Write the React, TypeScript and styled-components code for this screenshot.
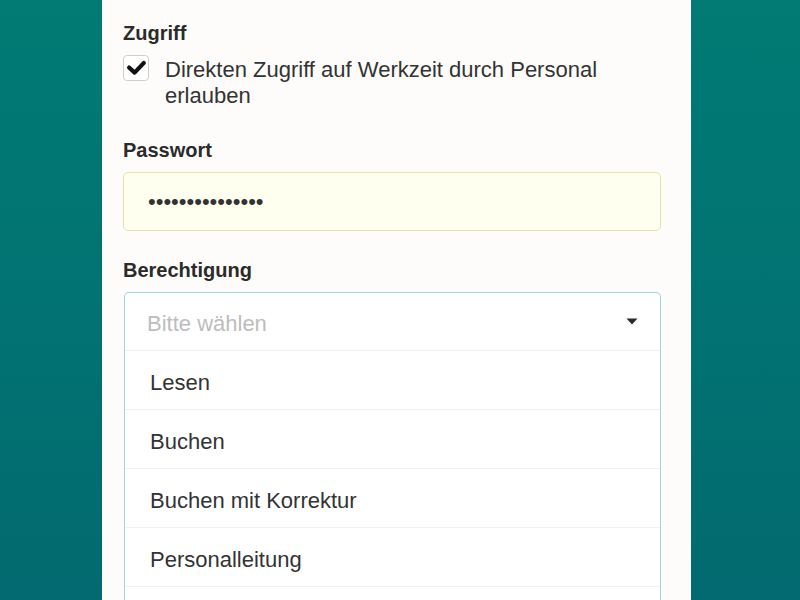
import React from "react";
import styled, { createGlobalStyle } from "styled-components";

const GlobalStyle = createGlobalStyle`
  html, body {
    margin: 0;
    padding: 0;
    height: 600px;
    overflow: hidden;
  }
  body {
    font-family: "Liberation Sans", Arial, Helvetica, sans-serif;
    background: linear-gradient(180deg, #017b74 0%, #026a70 100%);
  }
  * { box-sizing: border-box; }
`;

const Page = styled.div`
  height: 600px;
  display: flex;
  padding-left: 102px;
  overflow: hidden;
`;

const Panel = styled.form`
  width: 589px;
  height: 600px;
  background: #fdfcfa;
  padding: 21px 30px 0 21px;
  display: flex;
  flex-direction: column;
`;

const Group = styled.div<{ $after?: number }>`
  display: flex;
  flex-direction: column;
  margin-bottom: ${(p) => p.$after ?? 28}px;
`;

const Label = styled.label<{ $gap?: number }>`
  font-size: 20px;
  line-height: 24px;
  font-weight: 700;
  color: #2b2b2b;
  margin-bottom: ${(p) => p.$gap ?? 9}px;
`;

const CheckRow = styled.label`
  display: flex;
  align-items: flex-start;
  gap: 16px;
  cursor: pointer;
`;

const CheckBox = styled.span`
  flex: 0 0 26px;
  width: 26px;
  height: 26px;
  border: 1px solid #cfcfcf;
  border-radius: 4px;
  background: #fff;
  display: flex;
  align-items: center;
  justify-content: center;
`;

const CheckText = styled.span`
  font-size: 22px;
  line-height: 26px;
  padding-top: 2px;
  color: #333;
`;

const PasswordInput = styled.input`
  width: 538px;
  height: 59px;
  border: 1px solid #e6e3ad;
  border-radius: 5px;
  background: #fffff0;
  padding: 0 24px;
  font-family: "Liberation Sans", Arial, sans-serif;
  font-size: 22px;
  color: #333;
  outline: none;
`;

const Select = styled.div`
  width: 537px;
  border: 1px solid #9dd5db;
  border-bottom: none;
  border-radius: 5px 5px 0 0;
  background: #fff;
  display: flex;
  flex-direction: column;
  margin-left: 1px;
`;

const SelectHead = styled.div`
  height: 58px;
  display: flex;
  align-items: center;
  justify-content: space-between;
  padding: 4px 22px 0 22px;
  border-bottom: 1px solid #f1f1f1;
`;

const Placeholder = styled.span`
  font-size: 22px;
  color: #bdbdbd;
`;

const Option = styled.div`
  height: 59px;
  display: flex;
  align-items: center;
  padding: 5px 0 0 25px;
  font-size: 22px;
  color: #333;
  border-bottom: 1px solid #f1f1f1;
`;

const Caret = () => (
  <svg width="12" height="7" viewBox="0 0 12 7" aria-hidden style={{ marginTop: -4 }}>
    <path d="M0.5 0.5 L11.5 0.5 L6 6.5 Z" fill="#2a2a2a" />
  </svg>
);

const Check = () => (
  <svg width="26" height="26" viewBox="0 0 26 26" aria-hidden>
    <path
      d="M5.5 12.5 L11.5 18 L21.5 7.5"
      fill="none"
      stroke="#111"
      strokeWidth="4.5"
      strokeLinecap="round"
      strokeLinejoin="round"
    />
  </svg>
);

const options = ["Lesen", "Buchen", "Buchen mit Korrektur", "Personalleitung"];

export default function App() {
  return (
    <>
      <GlobalStyle />
      <Page>
        <Panel onSubmit={(e) => e.preventDefault()}>
          <Group $after={29}>
            <Label $gap={10}>Zugriff</Label>
            <CheckRow>
              <CheckBox>
                <Check />
              </CheckBox>
              <CheckText>
                Direkten Zugriff auf Werkzeit durch Personal
                <br />
                erlauben
              </CheckText>
            </CheckRow>
          </Group>
          <Group $after={27}>
            <Label $gap={10}>Passwort</Label>
            <PasswordInput type="password" readOnly value="passwort1234567" />
          </Group>
          <Group>
            <Label $gap={10}>Berechtigung</Label>
            <Select>
              <SelectHead>
                <Placeholder>Bitte wählen</Placeholder>
                <Caret />
              </SelectHead>
              {options.map((o) => (
                <Option key={o}>{o}</Option>
              ))}
              <Option />
            </Select>
          </Group>
        </Panel>
      </Page>
    </>
  );
}
